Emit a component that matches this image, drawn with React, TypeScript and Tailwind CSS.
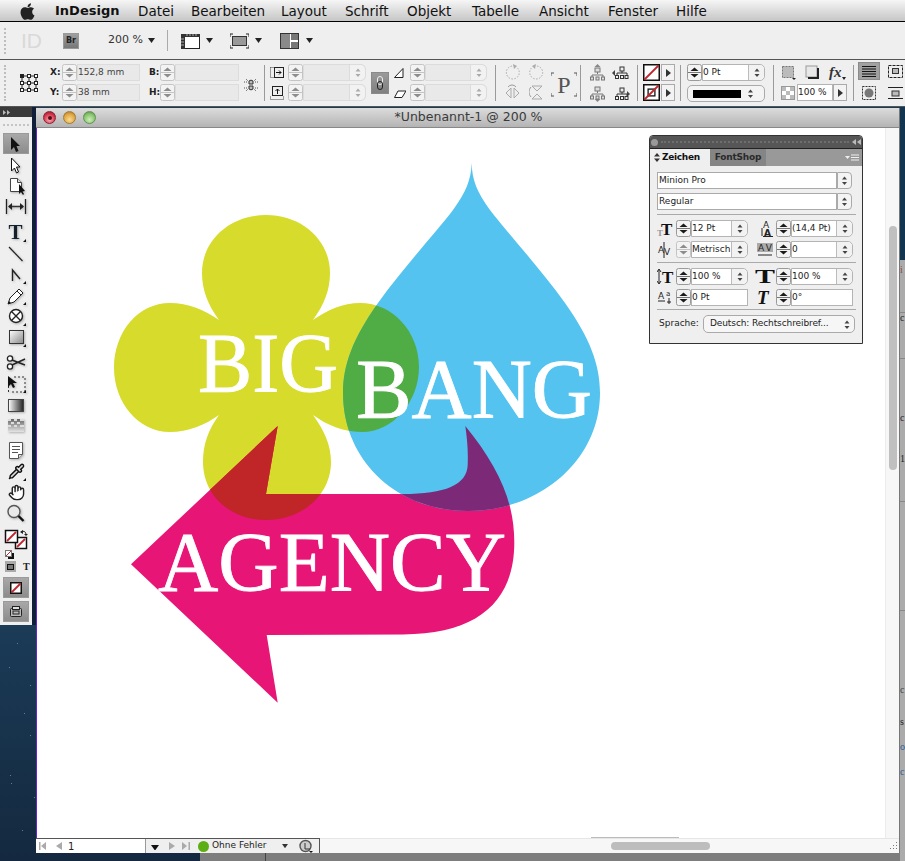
import React from 'react';
import { FaApple } from 'react-icons/fa';
import { Hand, Pipette } from 'lucide-react';

const Tri = ({ size = 7, color = '#222', className = '' }: { size?: number; color?: string; className?: string }) => (
  <svg width={size} height={size * 0.7} viewBox="0 0 10 7" className={'shrink-0 ' + className}><polygon points="0,0 10,0 5,7" fill={color} /></svg>
);

const Spin = ({ dim = false, h = 17 }: { dim?: boolean; h?: number }) => {
  const c = dim ? '#8c8c8c' : '#1a1a1a';
  const m = h / 2;
  return (
    <svg width={15} height={h} className="shrink-0">
      <rect x=".5" y=".5" width="14" height={h - 1} rx="2" fill="#f3f3f3" stroke={dim ? '#c4c4c4' : '#9a9a9a'} />
      <line x1="1" x2="14" y1={m} y2={m} stroke={dim ? '#c4c4c4' : '#777'} />
      <polygon points={`7.5,${m - 5} 3.5,${m - 1.5} 11.5,${m - 1.5}`} fill={c} />
      <polygon points={`3.5,${m + 1.5} 11.5,${m + 1.5} 7.5,${m + 5}`} fill={c} />
    </svg>
  );
};

const UpDown = ({ w = 16, dim = false }: { w?: number; dim?: boolean }) => {
  const c = dim ? '#aaa' : '#444';
  return (
    <svg width={w} height={15} className="shrink-0">
      <polygon points={`${w / 2},3.5 ${w / 2 - 2.5},6.5 ${w / 2 + 2.5},6.5`} fill={c} />
      <polygon points={`${w / 2 - 2.5},9 ${w / 2 + 2.5},9 ${w / 2},12`} fill={c} />
    </svg>
  );
};

const Field = ({ text = '', w, dis = false }: { text?: string; w: number; dis?: boolean }) => (
  <div style={{ width: w }} className={'h-[17px] shrink-0 border text-[9px] leading-[15px] whitespace-nowrap overflow-hidden ' + (dis ? 'bg-[#e9e9e9] border-[#dcdcdc] text-[#444]' : 'bg-white border-[#b4b4b4] text-[#222]')}>{text}</div>
);

const Combo = ({ text = '', w, dis = false }: { text?: string; w: number; dis?: boolean }) => (
  <div style={{ width: w }} className={'h-[17px] shrink-0 flex border rounded-r-[5px] ' + (dis ? 'bg-[#e9e9e9] border-[#dcdcdc]' : 'bg-white border-[#b4b4b4]')}>
    <div className="flex-1 text-[9px] leading-[15px] text-[#222] whitespace-nowrap overflow-hidden">{text}</div>
    <div className={'w-[16px] flex border-l rounded-r-[5px] ' + (dis ? 'border-[#dcdcdc] bg-[#f2f2f2]' : 'border-[#bbb] bg-[#f2f2f2]')}><UpDown dim={dis} /></div>
  </div>
);

const Sep = ({ className = '' }: { className?: string }) => <div className={'w-px h-[36px] mt-[1px] bg-[#9a9a9a] shrink-0 ' + className} />;

const NoneSwatch = ({ s = 17, inner = false }: { s?: number; inner?: boolean }) => (
  <svg width={s} height={s} className="shrink-0">
    <rect x=".75" y=".75" width={s - 1.5} height={s - 1.5} fill="#fff" stroke="#111" strokeWidth="1.5" />
    {inner && <rect x={s * 0.3} y={s * 0.3} width={s * 0.4} height={s * 0.4} fill="none" stroke="#111" strokeWidth="1.3" />}
    <line x1="1.5" y1={s - 1.5} x2={s - 1.5} y2="1.5" stroke="#c2262e" strokeWidth="1.8" />
  </svg>
);

const ArrowBtn = () => (
  <div className="w-[14px] h-[17px] border border-[#aaa] bg-[#f3f3f3] flex items-center justify-center shrink-0">
    <svg width="5" height="8"><polygon points="0,0 5,4 0,8" fill="#333" /></svg>
  </div>
);

const I = ({ w, h, children, className = '' }: { w: number; h: number; children: React.ReactNode; className?: string }) => (
  <svg width={w} height={h} viewBox={`0 0 ${w} ${h}`} className={'shrink-0 block ' + className}>{children}</svg>
);

const Grip = ({ className = '' }: { className?: string }) => <div className={'w-[2px] border-l-2 border-dotted border-[#bdbdbd] shrink-0 ' + className} />;

const Label = ({ t, w }: { t: string; w: number }) => (
  <div style={{ width: w }} className="shrink-0 text-[9px] font-semibold text-[#222] leading-[17px]">{t}</div>
);

const Menu = () => (
  <div className="h-[22px] shrink-0 border-b border-black bg-gradient-to-b from-[#f6f6f6] to-[#c6c6c6] flex items-center pt-[1px] text-[13.5px] text-[#111]">
    <FaApple className="ml-[19px] w-[17px] h-[19px] text-[#222] shrink-0" />
    <span className="ml-[19px] w-[63px] font-bold text-[13px] whitespace-nowrap">InDesign</span>
    <span className="ml-[20px] w-[34px]">Datei</span>
    <span className="ml-[19px] w-[72px] whitespace-nowrap">Bearbeiten</span>
    <span className="ml-[18px] w-[46px]">Layout</span>
    <span className="ml-[18px] w-[44px]">Schrift</span>
    <span className="ml-[18px] w-[47px]">Objekt</span>
    <span className="ml-[18px] w-[49px]">Tabelle</span>
    <span className="ml-[18px] w-[51px]">Ansicht</span>
    <span className="ml-[18px] w-[50px]">Fenster</span>
    <span className="ml-[18px]">Hilfe</span>
  </div>
);

const Row2 = () => (
  <div className="h-[38px] shrink-0 border-b border-[#555] bg-[#efefef] flex items-center text-[#333]">
    <Grip className="ml-[4px] h-[26px]" />
    <span className="ml-[15px] w-[20px] text-[21px] leading-none font-['Liberation_Sans',sans-serif] text-[#d9d9d9]">ID</span>
    <div className="ml-[22px] w-[16px] h-[16px] bg-gradient-to-b from-[#a0a0a0] to-[#777] border border-[#999] flex items-center justify-center text-[8px] font-bold text-[#222]">Br</div>
    <span className="ml-[29px] w-[36px] text-[11px] whitespace-nowrap">200 %</span>
    <Tri className="ml-[4px]" />
    <div className="ml-[12px] w-px h-[21px] bg-[#aaa]" />
    <I w={19} h={16} className="ml-[13px]">
      <rect x=".5" y="1.5" width="18" height="14" fill="#fff" stroke="#222" />
      <rect x="0" y="1" width="19" height="3" fill="#333" />
      <rect x="0" y="1" width="4" height="15" fill="#333" />
      <path d="M6 1v2M9 1v2M12 1v2M15 1v2M0 6h3M0 9h3M0 12h3" stroke="#ccc" strokeWidth=".8" />
    </I>
    <Tri className="ml-[6px]" />
    <I w={19} h={16} className="ml-[17px]">
      <path d="M0 4V1h3M16 1h3v3M0 12v3h3M16 15h3v-3" fill="none" stroke="#222" />
      <rect x="2.5" y="3.5" width="14" height="9" fill="#999" stroke="#333" />
    </I>
    <Tri className="ml-[6px]" />
    <I w={19} h={16} className="ml-[18px]">
      <rect x=".5" y=".5" width="18" height="15" fill="#fff" stroke="#333" />
      <rect x="1" y="1" width="9" height="14" fill="#8a8a8a" />
      <rect x="11" y="1" width="7" height="6" fill="#777" />
      <rect x="11" y="9" width="7" height="6" fill="#777" />
    </I>
    <Tri className="ml-[7px]" />
  </div>
);

const Row3 = () => (
  <div className="h-[47px] shrink-0 border-b border-[#555] bg-[#efefef] flex items-start pt-[4px] overflow-hidden">
    <Grip className="ml-[4px] h-[36px] mt-[1px]" />
    <I w={19} h={19} className="ml-[13px] mt-[9px]">
      <g fill="#fff" stroke="#222">
        {[1, 8, 15].map(y => [1, 8, 15].map(x => <rect key={x + '-' + y} x={x + 0.5} y={y + 0.5} width="3" height="3" fill={x === 1 && y === 1 ? '#222' : '#fff'} />))}
      </g>
      <path d="M5 3h3M12 3h3M5 10h3M12 10h3M5 17h3M12 17h3M3 5v3M3 12v3M10 5v3M10 12v3M17 5v3M17 12v3" stroke="#222" fill="none" />
    </I>
    <div className="ml-[12px] flex flex-col gap-[3px]">
      <div className="flex"><Label t="X:" w={12} /><Spin dim /><Field dis w={63} text="152,8 mm" /></div>
      <div className="flex"><Label t="Y:" w={12} /><Spin dim /><Field dis w={63} text="38 mm" /></div>
    </div>
    <div className="ml-[9px] flex flex-col gap-[3px]">
      <div className="flex"><Label t="B:" w={11} /><Spin dim /><Field dis w={64} /></div>
      <div className="flex"><Label t="H:" w={11} /><Spin dim /><Field dis w={64} /></div>
    </div>
    <I w={14} h={16} className="ml-[5px] mt-[13px]">
      <path d="M5 4a3 3 0 0 1 4 0v3h-4zM5 9h4v3a3 3 0 0 1-4 0z" fill="#bbb" stroke="#333" />
      <path d="M0 5h3M11 5h3M0 11h3M11 11h3M2 2l2 2M12 2l-2 2M2 14l2-2M12 14l-2-2" stroke="#555" strokeDasharray="1 1" />
    </I>
    <Sep className="ml-[6px]" />
    <div className="ml-[5px] flex flex-col gap-[3px]">
      <div className="flex items-center">
        <I w={14} h={13} className="mr-[4px]"><rect x="4.5" y="1.5" width="9" height="10" fill="#eee" stroke="#222" /><path d="M.5 1.5h4M.5 11.5h4M.5 1.5v10" stroke="#444" strokeDasharray="1 1" fill="none" /><path d="M6 6.5h5M9 4.5l2 2-2 2" stroke="#111" fill="none" /></I>
        <Spin dim /><Combo dis w={63} />
      </div>
      <div className="flex items-center">
        <I w={14} h={14} className="mr-[4px]"><rect x="2.5" y=".5" width="10" height="9" fill="#eee" stroke="#222" /><path d="M.5 10.5v3h13v-3" stroke="#444" strokeDasharray="1 1" fill="none" /><path d="M7.5 8V3M5.5 5l2-2 2 2" stroke="#111" fill="none" /></I>
        <Spin dim /><Combo dis w={63} />
      </div>
    </div>
    <div className="ml-[5px] mt-[8px] w-[18px] h-[22px] bg-gradient-to-b from-[#9a9a9a] to-[#808080] border border-[#8a8a8a] flex items-center justify-center shrink-0">
      <I w={8} h={14}><rect x="1.5" y=".5" width="5" height="8" rx="2.5" fill="none" stroke="#eee" /><rect x="1.5" y="5.5" width="5" height="8" rx="2.5" fill="none" stroke="#222" /></I>
    </div>
    <div className="ml-[5px] flex flex-col gap-[3px]">
      <div className="flex items-center">
        <I w={12} h={12} className="mr-[4px]"><path d="M.5 10.5L9 1.5v9z" fill="#fff" stroke="#222" /></I>
        <Spin dim /><Combo dis w={62} />
      </div>
      <div className="flex items-center">
        <I w={12} h={12} className="mr-[4px]"><path d="M.5 10.5L4 4h8l-4 6.5z" fill="#fff" stroke="#222" /></I>
        <Spin dim /><Combo dis w={62} />
      </div>
    </div>
    <Sep className="ml-[8px]" />
    <div className="ml-[9px] grid grid-cols-[15px_15px] gap-x-[9px] gap-y-[4px]">
      <I w={15} h={16}><path d="M12.5 4a6.5 6.5 0 1 1-4.5-2" fill="none" stroke="#aaa" strokeDasharray="1.5 1.5" /><path d="M8 0l4 2-3 3z" fill="#aaa" /></I>
      <I w={15} h={16}><path d="M2.5 4a6.5 6.5 0 1 0 4.5-2" fill="none" stroke="#aaa" strokeDasharray="1.5 1.5" /><path d="M7 0L3 2l3 3z" fill="#aaa" /></I>
      <I w={15} h={17}><path d="M6 4v10L1 9zM9 4v10l5-5z" fill="#eee" stroke="#aaa" /><path d="M3 3a5 5 0 0 1 8 0" fill="none" stroke="#999" /></I>
      <I w={15} h={17}><path d="M3 2h10L8 7zM3 15h10L8 10z" fill="#eee" stroke="#aaa" /><path d="M2 3a7 7 0 0 0 0 10" fill="none" stroke="#999" /></I>
    </div>
    <div className="ml-[7px] mt-[8px] w-[26px] h-[25px] shrink-0 relative border-[#555] flex items-center justify-center">
      <I w={26} h={25} className="absolute inset-0"><path d="M0 4V1h3M23 1h3v3M0 21v3h3M23 24h3v-3" fill="none" stroke="#555" /></I>
      <span className="text-[24px] leading-none text-[#555] font-['Liberation_Serif',serif]">P</span>
    </div>
    <Sep className="ml-[3px]" />
    <div className="ml-[9px] grid grid-cols-[15px_18px] gap-x-[7px] gap-y-[4px]">
      {[0, 1].map(k => (
        <I key={k} w={15} h={17}>
          <path d={k === 0 ? 'M7.5 0l3 3h-6z' : 'M7.5 17l3-3h-6z'} fill="#888" />
          <rect x="5" y={k === 0 ? 4 : 2} width="5" height="4" fill="#ddd" stroke="#777" />
          <path d={`M7.5 ${k === 0 ? 8 : 6}v2M2 ${k === 0 ? 13 : 11}v-2h11v2`} stroke="#777" fill="none" />
          <rect x="0.5" y={k === 0 ? 13 : 11} width="3" height="3" fill="#ddd" stroke="#777" />
          <rect x="6" y={k === 0 ? 13 : 11} width="3" height="3" fill="#ddd" stroke="#777" />
          <rect x="11.5" y={k === 0 ? 13 : 11} width="3" height="3" fill="#ddd" stroke="#777" />
        </I>
      )).flatMap((el, k) => [el, (
        <I key={'r' + k} w={18} h={15} className="mt-[1px]">
          <path d={k === 0 ? 'M0 8l3-3v6z' : 'M18 8l-3-3v6z'} fill="#444" />
          <rect x="8" y="2" width="4" height="4" fill="#eee" stroke="#333" />
          <path d="M10 6v2M5 11V8h10v3" stroke="#333" fill="none" />
          <rect x="3.5" y="10.5" width="3" height="3" fill="#eee" stroke="#333" /><rect x="8.5" y="10.5" width="3" height="3" fill="#eee" stroke="#333" /><rect x="13" y="10.5" width="3" height="3" fill="#eee" stroke="#333" />
        </I>
      )])}
    </div>
    <Sep className="ml-[7px]" />
    <div className="ml-[5px] flex flex-col gap-[3px]">
      <div className="flex gap-[1px]"><NoneSwatch s={17} /><ArrowBtn /></div>
      <div className="flex gap-[1px]"><NoneSwatch s={17} inner /><ArrowBtn /></div>
    </div>
    <Sep className="ml-[5px]" />
    <div className="ml-[6px] flex flex-col gap-[3px] w-[78px]">
      <div className="flex"><Spin /><Combo w={63} text="0 Pt" /></div>
      <div className="h-[17px] mt-[1px] border border-[#aaa] rounded-[5px] bg-[#f4f4f4] flex items-center pl-[5px]">
        <div className="w-[48px] h-[8px] bg-black" /><UpDown w={19} />
      </div>
    </div>
    <Sep className="ml-[8px]" />
    <div className="ml-[7px] flex flex-col gap-[3px] w-[65px]">
      <div className="flex h-[17px] items-center">
        <I w={15} h={15}><rect x="1.5" y="1.5" width="11" height="11" fill="#bbb" stroke="#777" strokeDasharray="2 1" /><polygon points="11,13 15,13 13,15" fill="#222" /></I>
        <I w={15} h={15} className="ml-[9px]"><rect x="1" y="1" width="11" height="11" fill="#e8e8e8" stroke="#999" /><path d="M13 3v10H3" fill="none" stroke="#222" strokeWidth="2" /></I>
        <span className="ml-[9px] text-[15px] leading-none font-bold italic font-['Liberation_Serif',serif] text-[#333]">fx</span>
        <svg width="4" height="3" className="mt-[11px]"><polygon points="0,0 4,0 2,3" fill="#222" /></svg>
      </div>
      <div className="flex h-[17px] items-center">
        <I w={14} h={14}><rect x=".5" y=".5" width="13" height="13" fill="#fff" stroke="#999" /><path d="M1 1h4v4H1zM9 1h4v4H9zM5 5h4v4H5zM1 9h4v4H1zM9 9h4v4H9z" fill="#bbb" /></I>
        <div className="ml-[2px]"><Field w={36} text="100 %" /></div>
        <ArrowBtn />
      </div>
    </div>
    <Sep className="ml-[7px]" />
    <div className="ml-[4px] w-[47px] grid grid-cols-[22px_16px] gap-x-[7px] gap-y-[3px] -mt-[2px]">
      <div className="h-[18px] bg-[#a0a0a0] border border-[#8a8a8a] flex items-center justify-center">
        <I w={14} h={11}><path d="M0 .5h14M0 3h14M0 5.5h14M0 8h14M0 10.5h14" stroke="#111" /></I>
      </div>
      <div className="flex items-center justify-center"><I w={15} h={13}><rect x=".5" y=".5" width="14" height="12" fill="none" stroke="#222" strokeDasharray="3 1" /><rect x="4.5" y="3.5" width="6" height="5" fill="#bbb" stroke="#333" /></I></div>
      <div className="h-[20px] flex items-center justify-center"><I w={14} h={14}><rect x=".5" y=".5" width="13" height="13" fill="none" stroke="#333" strokeDasharray="2 1" /><circle cx="7" cy="7" r="4.5" fill="#777" /></I></div>
      <div className="flex items-center justify-center"><I w={15} h={12}><path d="M0 .5h15M0 11.5h15" stroke="#222" /><rect x="4" y="4" width="7" height="5" fill="#bbb" stroke="#333" /></I></div>
    </div>
  </div>
);

const Corner = ({ x, y }: { x: number; y: number }) => <polygon points={`${x},${y} ${x - 3},${y} ${x},${y - 3}`} fill="#111" />;

const Tool = ({ h, children, className = '' }: { h: number; children: React.ReactNode; className?: string }) => (
  <svg width={32} height={h} viewBox={`0 0 32 ${h}`} className={'block shrink-0 drop-shadow-[1px_1px_1px_rgba(0,0,0,0.25)] ' + className}>{children}</svg>
);

const Tools = () => (
  <div className="w-[32px] h-[518px] bg-[#efefef] flex flex-col shrink-0">
    <div className="h-[10px] bg-[#3a3a3a] flex items-center pl-[3px] shrink-0">
      <svg width="8" height="5"><polygon points="0,0 3,2.5 0,5" fill="#bbb" /><polygon points="4,0 7,2.5 4,5" fill="#bbb" /></svg>
    </div>
    <div className="h-[16px] shrink-0 flex items-center justify-center"><div className="w-[26px] border-t-2 border-dotted border-[#c4c4c4]" /></div>
    <div className="mx-[3px] h-[21px] bg-gradient-to-b from-[#a8a8a8] to-[#8c8c8c] border border-[#9a9a9a] shrink-0">
      <svg width="24" height="19" viewBox="4 1 24 19"><polygon points="11,4 11,17 14,14 16,19 18.5,18 16.5,13 20,13" fill="#111" /></svg>
    </div>
    <div className="mt-[1px]" />
    <Tool h={20}><polygon points="11.5,3 11.5,16 14.5,13 16.5,18 18.5,17 16.5,12 20,12" fill="#fff" stroke="#111" /></Tool>
    <Tool h={21}><path d="M10.5 3.5h7l4 4v9h-11z" fill="#fff" stroke="#444" /><path d="M17.5 3.5v4h4" fill="#ddd" stroke="#444" /><polygon points="19,9 19,19 21,17 23,20 24,19 22.5,16.5 25,16" fill="#111" /></Tool>
    <Tool h={22}><path d="M6.5 3v15M25.5 3v15" stroke="#222" strokeWidth="1.3" /><path d="M9 10.5h14" stroke="#333" strokeWidth="1.5" /><path d="M12 7l-4 3.5 4 3.5zM20 7l4 3.5-4 3.5z" fill="#222" /></Tool>
    <div className="mt-[3px]" />
    <Tool h={22}>
      <text x="15.5" y="18" textAnchor="middle" fontSize="21" fontWeight="700" fontFamily="'Liberation Serif',serif" fill="#14202c">T</text>
      <Corner x={26} y={21} />
    </Tool>
    <div className="mt-[1px]" />
    <Tool h={21}><line x1="9" y1="3" x2="22.5" y2="17" stroke="#222" strokeWidth="1.2" /></Tool>
    <Tool h={21}><path d="M12.5 16V5L20 14" fill="none" stroke="#222" strokeWidth="1.4" /><Corner x={26} y={19} /></Tool>
    <Tool h={20}><polygon points="8,18 10,12 19,3 23,7 14,16" fill="#fff" stroke="#222" /><path d="M17 5l4 4" stroke="#222" /><polygon points="8,18 9,15 11,17" fill="#111" /><Corner x={26} y={19} /></Tool>
    <Tool h={21}><circle cx="16" cy="10" r="6.5" fill="#fff" stroke="#222" strokeWidth="1.4" /><path d="M11.5 5.5l9 9M20.5 5.5l-9 9" stroke="#222" strokeWidth="1.4" /><Corner x={26} y={20} /></Tool>
    <Tool h={22}><rect x="9.5" y="3.5" width="14" height="13" fill="url(#grayfade)" stroke="#333" /><Corner x={26} y={20} /></Tool>
    <div className="mt-[3px]" />
    <Tool h={21}><circle cx="10" cy="6.5" r="2.6" fill="#fff" stroke="#222" strokeWidth="1.3" /><circle cx="10" cy="14.5" r="2.6" fill="#fff" stroke="#222" strokeWidth="1.3" /><path d="M12 8l13 5M12 13L25 7" stroke="#222" strokeWidth="1.4" /></Tool>
    <Tool h={21}><path d="M8.5 5v14M25 5v14M12 19h10M14 4h11" stroke="#333" strokeDasharray="2 2" fill="none" /><polygon points="8,3 8,14 11,11 13,15 15,14 13,10 17,10" fill="#111" /><Corner x={26} y={20} /></Tool>
    <Tool h={21}><rect x="8.5" y="5.5" width="15" height="12" fill="url(#blackfade)" stroke="#444" /></Tool>
    <Tool h={21}><rect x="8" y="4" width="16" height="13" fill="url(#featherfade)" /><path d="M8 5h3M14 5h3M20 5h4M11 8h3M17 8h3M8 11h3M14 11h3M20 11h4" stroke="#ddd" strokeWidth="2" fill="none" /></Tool>
    <div className="mt-[4px]" />
    <Tool h={21}><path d="M9.5 2.5h13v12l-4 4h-9z" fill="#fff" stroke="#555" /><path d="M18.5 18.5v-4h4" fill="#ddd" stroke="#555" /><path d="M12 6.5h8M12 9.5h8M12 12.5h6" stroke="#555" /></Tool>
    <div className="w-[32px] h-[21px] flex items-center justify-center relative shrink-0">
      <Pipette size={17} fill="#ddd" className="text-[#111]" />
      <svg width="3" height="3" className="absolute right-[6px] bottom-[1px]"><polygon points="3,0 3,3 0,3" fill="#111" /></svg>
    </div>
    <div className="w-[32px] h-[21px] flex items-center justify-center shrink-0"><Hand size={17} fill="#fff" className="text-[#222]" /></div>
    <Tool h={21}><circle cx="14" cy="8.5" r="6" fill="#e8e8e8" stroke="#555" strokeWidth="1.4" /><path d="M18.5 13l5 5" stroke="#111" strokeWidth="2.4" /></Tool>
    <div className="mt-[4px]" />
    <svg width={32} height={32} viewBox="0 0 32 32" className="block shrink-0">
      <rect x="15.5" y="9.5" width="11" height="11" fill="#fff" stroke="#111" strokeWidth="1.5" /><line x1="17" y1="19" x2="25" y2="11" stroke="#c2262e" strokeWidth="1.8" />
      <rect x="5.5" y="2.5" width="12" height="12" fill="#fff" stroke="#111" strokeWidth="1.5" /><line x1="7" y1="13" x2="16" y2="4" stroke="#c2262e" strokeWidth="1.8" />
      <path d="M21 4a3 3 0 0 1 5 2" fill="none" stroke="#222" /><polygon points="20,4 23,2 23,6" fill="#222" /><polygon points="24,6 28,6 26,8" fill="#222" />
      <rect x="8" y="25" width="6" height="6" fill="#111" /><rect x="5.5" y="22.5" width="6" height="6" fill="#fff" stroke="#777" /><line x1="6" y1="28" x2="11" y2="23" stroke="#c2262e" />
    </svg>
    <div className="flex items-center pl-[5px] h-[13px] shrink-0">
      <div className="w-[11px] h-[11px] bg-[#aaa] flex items-center justify-center"><div className="w-[7px] h-[6px] bg-[#777] border border-[#111]" /></div>
      <span className="ml-[7px] text-[10px] leading-none font-bold font-['Liberation_Serif',serif] text-[#222]">T</span>
    </div>
    <div className="mt-[4px] mx-[3px] h-[21px] bg-gradient-to-b from-[#a8a8a8] to-[#8c8c8c] border border-[#9a9a9a] flex items-center justify-center shrink-0">
      <NoneSwatch s={12} />
    </div>
    <div className="mt-[3px] mx-[3px] h-[21px] bg-gradient-to-b from-[#a8a8a8] to-[#8c8c8c] border border-[#9a9a9a] flex items-center justify-center shrink-0">
      <svg width="12" height="11"><rect x=".5" y="2.5" width="11" height="8" rx="1" fill="#bbb" stroke="#222" /><rect x="2.5" y=".5" width="7" height="3" fill="#ddd" stroke="#222" /><rect x="3" y="5" width="6" height="3" fill="none" stroke="#222" /></svg>
    </div>
  </div>
);

const FLOWER = 'M219 320C208 305 202 290 202 273C202 240 230 215 266 215C302 215 330 240 330 273C330 290 324 305 313 320C327 310 343 303 360 303C393 303 419 332 419 367C419 402 393 432 362 432C343 432 327 425 313 415C324 430 331 445 331 462C331 495 302 520 266 520C230 520 203 495 203 462C203 445 208 430 219 415C205 425 188 432 170 432C138 432 114 402 114 368C114 332 138 303 170 303C188 303 205 310 219 320Z';
const DROP = 'M471.7 163C472 180 477 192 490 210C505 230 540 268 565 303C590 338 600 365 600 393C600 460 540 511 468 511C396 511 343 460 343 393C343 365 353 338 378 303C403 268 438 230 453 210C466 192 471 180 471.7 163Z';
const ARROW = 'M277.7 426L131 564.3L277.7 702.7L266.7 635L403 634.5C480 634 514 600 514.3 543C514.5 500 497 465 465.3 426C468 445 468 455 467.7 465C467 485 445 494 403 494L266 494Z';

const Logo = () => (
  <svg width={848} height={710} viewBox="37 128 848 710" className="block">
    <defs>
      <clipPath id="cd"><path d={DROP} /></clipPath>
      <clipPath id="ca"><path d={ARROW} /></clipPath>
    </defs>
    <path d={FLOWER} fill="#D7DB2C" />
    <path d={ARROW} fill="#E61576" />
    <path d={DROP} fill="#54C3EF" />
    <g clipPath="url(#cd)"><path d={FLOWER} fill="#50AC45" /></g>
    <g clipPath="url(#ca)"><path d={FLOWER} fill="#C02528" /><path d={DROP} fill="#7C2A78" /></g>
    <g fill="#fff" stroke="#fff" strokeWidth="0.8" fontFamily="'Liberation Serif',serif" fontSize="85">
      <text x="198" y="392" textLength="140" lengthAdjust="spacingAndGlyphs">BIG</text>
      <text x="356" y="418" textLength="236" lengthAdjust="spacingAndGlyphs">BANG</text>
      <text x="158" y="591" textLength="348" lengthAdjust="spacingAndGlyphs">AGENCY</text>
    </g>
    <line x1="591" x2="679" y1="837.5" y2="837.5" stroke="#bbb" />
  </svg>
);

const Status = () => (
  <div className="h-[15px] shrink-0 flex bg-[#f7f7f7]">
    <div className="w-[284px] h-[15px] border-t border-r border-[#555] bg-[#efefef] flex items-center text-[9px] text-[#222] shrink-0">
      <div className="w-[110px] h-[14px] bg-white flex items-center shrink-0 border-r border-[#999]">
        <svg width="8" height="8" className="ml-[3px]"><path d="M0 0h1.5v8H0zM7 0v8L2 4z" fill="#aaa" /></svg>
        <svg width="6" height="8" className="ml-[9px]"><path d="M6 0v8L0 4z" fill="#aaa" /></svg>
        <span className="ml-[6px] text-[10px]">1</span>
      </div>
      <Tri size={8} color="#111" className="ml-[5px] mt-[3px]" />
      <svg width="6" height="8" className="ml-[10px]"><path d="M0 0v8l6-4z" fill="#aaa" /></svg>
      <svg width="8" height="8" className="ml-[7px]"><path d="M6.5 0H8v8H6.5zM0 0v8l5-4z" fill="#aaa" /></svg>
      <div className="ml-[8px] w-[11px] h-[11px] rounded-full bg-[#5cae12] shrink-0" />
      <span className="ml-[3px] w-[70px] whitespace-nowrap">Ohne Fehler</span>
      <Tri size={6} color="#333" />
      <svg width="14" height="14" className="ml-[11px]"><circle cx="6.5" cy="7" r="5.5" fill="#ccc" stroke="#555" strokeWidth="1.4" /><path d="M6 4v6h5" fill="none" stroke="#333" /><polygon points="10,12 14,12 12,14" fill="#111" /></svg>
    </div>
    <div className="flex-1 relative border-t border-[#e6e6e6] flex items-center">
      <div className="ml-[291px] w-[99px] h-[8px] rounded-[4px] bg-[#bdbdbd]" />
      <svg width="10" height="10" className="absolute right-[1px] bottom-[2px]">
        {[[8, 1], [8, 4], [5, 4], [8, 7], [5, 7], [2, 7]].map(([x, y]) => <rect key={x + '-' + y} x={x} y={y} width="1" height="1" fill="#777" />)}
      </svg>
    </div>
  </div>
);

const Row = ({ children, className = '' }: { children: React.ReactNode; className?: string }) => <div className={'flex h-[17px] items-center ' + className}>{children}</div>;

const ICON = "'Liberation Serif',serif";
const DV = "'DejaVu Sans',sans-serif";

const Zeichen = () => (
  <div className="absolute left-[649px] top-[135px] w-[214px] h-[209px] border border-[#333] rounded-t-[4px] overflow-hidden bg-[#efefef] flex flex-col text-[#222]">
    <div className="h-[12px] bg-[#565656] flex items-center px-[1px] shrink-0">
      <div className="w-[7px] h-[7px] rounded-full bg-[#9a9a9a]" />
      <div className="flex-1 mx-[3px] border-t-2 border-dotted border-[#6e6e6e]" />
      <svg width="9" height="6"><polygon points="4,0 4,6 0,3" fill="#bbb" /><polygon points="9,0 9,6 5,3" fill="#bbb" /></svg>
    </div>
    <div className="h-[18px] flex bg-[#999] border-t border-[#222] shrink-0 text-[9px] font-bold leading-[17px]">
      <div className="w-[60px] bg-[#efefef] pl-[4px] flex items-center"><svg width="6" height="9" className="mr-[2px]"><polygon points="3,0 6,3.5 0,3.5" fill="#333" /><polygon points="0,5.5 6,5.5 3,9" fill="#333" /></svg><span className="text-[#111] tracking-[-0.3px]">Zeichen</span></div>
      <div className="w-[56px] bg-[#858585] text-center text-[#2a2a2a] tracking-[-0.2px]">FontShop</div>
      <div className="flex-1 flex items-center justify-end pr-[2px]">
        <svg width="15" height="8"><polygon points="0,2 5,2 2.5,5" fill="#eee" /><path d="M6 1h8M6 3.5h8M6 6h8" stroke="#eee" /></svg>
      </div>
    </div>
    <div className="px-[7px] pt-[6px] flex flex-col text-[9px]">
      <div className="flex w-[195px] h-[18px]"><div className="w-[180px] h-[17px] border border-[#aaa] bg-white pl-[1px] text-[9px] leading-[15px]">Minion Pro</div><div className="w-[15px] h-[17px] border border-[#aaa] rounded-r-[4px] bg-[#f4f4f4] flex"><UpDown w={13} /></div></div>
      <div className="flex w-[195px] h-[18px] mt-[3px]"><div className="w-[180px] h-[17px] border border-[#aaa] bg-white pl-[1px] text-[9px] leading-[15px]">Regular</div><div className="w-[15px] h-[17px] border border-[#aaa] rounded-r-[4px] bg-[#f4f4f4] flex"><UpDown w={13} /></div></div>
      <div className="mt-[3px] h-px w-[199px] bg-[#aaa]" />
      <div className="mt-[5px] flex">
        <div className="flex flex-col gap-[4px]">
          <Row><span className="w-[19px] h-[17px] shrink-0"><svg width="17" height="17"><text x="0" y="16" fontSize="9" fontWeight="700" fontFamily={ICON} fill="#999">T</text><text x="4" y="15" fontSize="17" fontWeight="700" fontFamily={ICON} fill="#111">T</text></svg></span><Spin /><Combo w={57} text="12 Pt" /></Row>
          <Row><span className="w-[19px] h-[17px] shrink-0"><svg width="17" height="17"><text x="1" y="12" fontSize="9" fill="#222" fontFamily={DV}>A</text><text x="7" y="14" fontSize="9" fill="#222" fontFamily={DV}>V</text><path d="M7 1v16" stroke="#222" /></svg></span><Spin dim /><Combo w={57} text="Metrisch" /></Row>
        </div>
        <div className="ml-[12px] flex flex-col gap-[4px]">
          <Row><span className="w-[16px] h-[17px] shrink-0"><svg width="14" height="17"><text x="3" y="8" fontSize="9" fill="#222" fontFamily={DV}>A</text><text x="4" y="16" fontSize="9" fontWeight="700" fill="#222" fontFamily={DV}>A</text><path d="M2 8v8M3 16.5h10" stroke="#222" /></svg></span><Spin /><Combo w={62} text="(14,4 Pt)" /></Row>
          <Row><span className="w-[16px] h-[17px] shrink-0"><svg width="16" height="17" className="-ml-[3px]"><rect x="0" y="2" width="16" height="9" fill="#aaa" /><text x="1" y="10" fontSize="9" fill="#222" fontFamily={DV} textLength="14">AV</text><path d="M1 14h14" stroke="#222" /></svg></span><Spin /><Combo w={62} text="0" /></Row>
        </div>
      </div>
      <div className="mt-[4px] h-px w-[199px] bg-[#aaa]" />
      <div className="mt-[5px] flex">
        <div className="flex flex-col gap-[4px]">
          <Row><span className="w-[19px] h-[17px] shrink-0"><svg width="17" height="17"><path d="M2 2v13M0 4l2-3 2 3M0 13l2 3 2-3" stroke="#222" fill="none" /><text x="5" y="15" fontSize="17" fontWeight="700" fontFamily={ICON} fill="#111">T</text></svg></span><Spin /><Combo w={57} text="100 %" /></Row>
          <Row><span className="w-[19px] h-[17px] shrink-0"><svg width="17" height="17"><text x="1" y="10" fontSize="9" fill="#222" fontFamily={DV}>A</text><text x="9" y="7" fontSize="7" fill="#222" fontFamily={DV}>a</text><path d="M1 12h7M12 9v6M10 13h4" stroke="#222" /></svg></span><Spin /><Field w={57} text="0 Pt" /></Row>
        </div>
        <div className="ml-[12px] flex flex-col gap-[4px]">
          <Row><span className="w-[16px] h-[17px] shrink-0"><svg width="20" height="17" className="-ml-[5px]"><text x="0" y="15" fontSize="19" fontWeight="700" fontFamily={ICON} fill="#111" textLength="20" lengthAdjust="spacingAndGlyphs">T</text></svg></span><Spin /><Combo w={62} text="100 %" /></Row>
          <Row><span className="w-[16px] h-[17px] shrink-0"><svg width="18" height="17" className="-ml-[3px]"><text x="0" y="15" fontSize="19" fontWeight="700" fontStyle="italic" fontFamily={ICON} fill="#111">T</text></svg></span><Spin /><Field w={62} text="0°" /></Row>
        </div>
      </div>
      <div className="mt-[3px] h-px w-[199px] bg-[#aaa]" />
      <div className="mt-[5px] flex items-center">
        <span className="w-[44px] ml-[2px] text-[9px]">Sprache:</span>
        <div className="w-[152px] h-[18px] border border-[#aaa] rounded-[5px] bg-[#f6f6f6] flex items-center pl-[6px] text-[9px]">
          <span className="w-[130px] whitespace-nowrap overflow-hidden tracking-[-0.1px]">Deutsch: Rechtschreibref...</span><UpDown w={14} />
        </div>
      </div>
    </div>
  </div>
);

const Stars = ({ w, h, pts }: { w: number; h: number; pts: [number, number][] }) => (
  <svg width={w} height={h} className="block">
    {pts.map(([x, y]) => <rect key={x + '-' + y} x={x} y={y} width="1" height="1" fill="#6c7a98" />)}
  </svg>
);

export default function App() {
  return (
    <div className="relative w-[905px] h-[861px] overflow-hidden flex flex-col bg-[#1a3a55] font-['DejaVu_Sans',sans-serif]">
      <svg className="absolute w-0 h-0">
        <defs>
          <linearGradient id="grayfade" x1="0" y1="0" x2="1" y2="1"><stop offset="0" stopColor="#fff" /><stop offset="1" stopColor="#888" /></linearGradient>
          <linearGradient id="blackfade" x1="0" y1="0" x2="1" y2="0"><stop offset="0" stopColor="#fff" /><stop offset="1" stopColor="#222" /></linearGradient>
          <linearGradient id="featherfade" x1="0" y1="0" x2="0" y2="1"><stop offset="0" stopColor="#666" /><stop offset="1" stopColor="#e4e4e4" /></linearGradient>
        </defs>
      </svg>
      <Menu />
      <Row2 />
      <Row3 />
      <div className="flex-1 flex min-h-0">
        <div className="w-[36px] shrink-0 flex flex-col">
          <div className="flex shrink-0 h-[518px]">
            <Tools />
            <div className="w-[4px] bg-[#101e3a]" />
          </div>
          <div className="flex-1 bg-gradient-to-b from-[#1b3b57] to-[#14293f]">
            <Stars w={36} h={236} pts={[[17, 18], [9, 42], [30, 60], [24, 88], [30, 110], [10, 150], [11, 158], [34, 172], [22, 205]]} />
          </div>
        </div>
        <div className="w-[864px] shrink-0 flex flex-col pt-[1px]">
          <div className="h-[745px] shrink-0 border-r border-[#777] flex flex-col">
            <div className="h-[20px] shrink-0 bg-gradient-to-b from-[#dcdcdc] to-[#b4b4b4] flex items-center relative border-b border-[#888]">
              <div className="ml-[7px] w-[13px] h-[13px] rounded-full bg-[radial-gradient(circle_at_50%_70%,#f7b0b8,#d8324a_60%,#7a1c2a)] border border-[#8a2030] flex items-center justify-center"><div className="w-[4px] h-[4px] rounded-full bg-[#5a0d18]" /></div>
              <div className="ml-[7px] w-[13px] h-[13px] rounded-full bg-[radial-gradient(circle_at_50%_70%,#f8dc90,#e0a540_60%,#9a6c28)] border border-[#a87a30]" />
              <div className="ml-[7px] w-[13px] h-[13px] rounded-full bg-[radial-gradient(circle_at_50%_70%,#cdeeb8,#86c26c_60%,#4e8442)] border border-[#5e9450]" />
              <div className="flex-1 text-center text-[12.5px] text-[#3a3a3a] pr-[58px]">*Unbenannt-1 @ 200 %</div>
            </div>
            <div className="flex-1 flex min-h-0">
              <div className="w-[849px] shrink-0 bg-white border-l border-[#6a1fd0] overflow-hidden"><Logo /></div>
              <div className="flex-1 bg-[#f7f7f7] border-l border-[#ececec] pt-[98px] pl-[3px]">
                <div className="w-[8px] h-[244px] rounded-[4px] bg-[#c0c0c0]" />
              </div>
            </div>
            <Status />
          </div>
          <div className="flex-1 flex">
            <div className="w-[164px] shrink-0 bg-[#14293f]" />
            <div className="w-[66px] bg-[#7d7d7d] border-r border-[#444] shrink-0" />
            <div className="flex-1 bg-[#7d7d7d]" />
          </div>
        </div>
        <div className="w-[5px] shrink-0 flex flex-col">
          <div className="h-[153px] shrink-0 bg-[#14354f]" />
          <div className="flex-1 bg-[#ababab] overflow-hidden text-[10px] leading-none text-[#222] flex flex-col font-['Liberation_Serif',serif]">
            <span className="mt-[5px] h-[12px] text-[#8a4a3a] whitespace-nowrap">i</span>
            <div className="mt-[35px] h-px bg-[#888]" />
            <span className="h-[10px] whitespace-nowrap">c</span>
            <div className="mt-[35px] h-px bg-[#888]" />
            <span className="mt-[54px] h-[10px] whitespace-nowrap">c</span>
            <span className="mt-[31px] h-[10px] whitespace-nowrap">1</span>
            <div className="mt-[37px] h-px bg-[#888]" />
            <div className="mt-[108px] h-px bg-[#888]" />
            <span className="mt-[74px] h-[11px] whitespace-nowrap text-[#444]">c</span>
            <span className="mt-[21px] h-[11px] whitespace-nowrap">s</span>
            <span className="mt-[14px] h-[11px] whitespace-nowrap text-[#2a5a9a]">o</span>
            <span className="mt-[14px] h-[11px] whitespace-nowrap text-[#2a5a9a]">c</span>
          </div>
        </div>
      </div>
      <Zeichen />
    </div>
  );
}
